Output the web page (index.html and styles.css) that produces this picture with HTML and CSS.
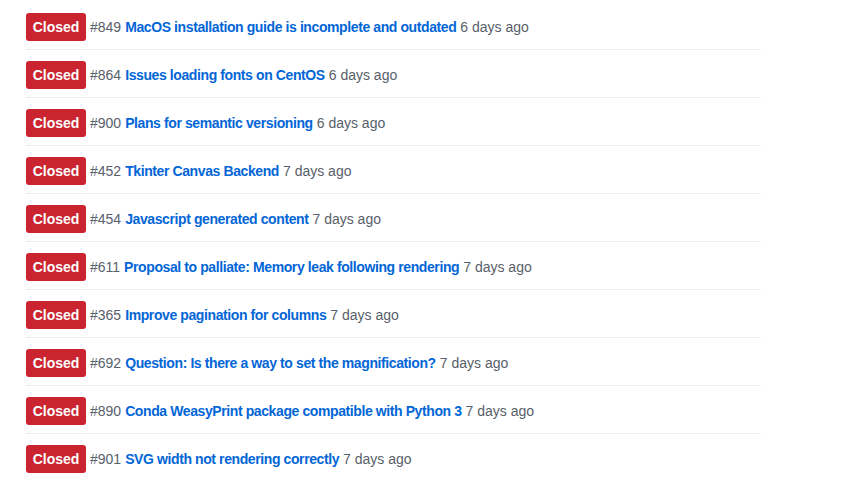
FILE: index.html
```html
<!DOCTYPE html>
<html>
<head>
<meta charset="utf-8">
<link rel="stylesheet" href="styles.css">
</head>
<body>
<ul class="list">
  <li class="row"><span class="badge">Closed</span><span class="num">#849</span><a class="title" href="#">MacOS installation guide is incomplete and outdated</a><span class="time">6 days ago</span></li>
  <li class="row"><span class="badge">Closed</span><span class="num">#864</span><a class="title" href="#">Issues loading fonts on CentOS</a><span class="time">6 days ago</span></li>
  <li class="row"><span class="badge">Closed</span><span class="num">#900</span><a class="title" href="#">Plans for semantic versioning</a><span class="time">6 days ago</span></li>
  <li class="row"><span class="badge">Closed</span><span class="num">#452</span><a class="title" href="#">Tkinter Canvas Backend</a><span class="time">7 days ago</span></li>
  <li class="row"><span class="badge">Closed</span><span class="num">#454</span><a class="title" href="#">Javascript generated content</a><span class="time">7 days ago</span></li>
  <li class="row"><span class="badge">Closed</span><span class="num">#611</span><a class="title" href="#">Proposal to palliate: Memory leak following rendering</a><span class="time">7 days ago</span></li>
  <li class="row"><span class="badge">Closed</span><span class="num">#365</span><a class="title" href="#">Improve pagination for columns</a><span class="time">7 days ago</span></li>
  <li class="row"><span class="badge">Closed</span><span class="num">#692</span><a class="title" href="#">Question: Is there a way to set the magnification?</a><span class="time">7 days ago</span></li>
  <li class="row"><span class="badge">Closed</span><span class="num">#890</span><a class="title" href="#">Conda WeasyPrint package compatible with Python 3</a><span class="time">7 days ago</span></li>
  <li class="row last"><span class="badge">Closed</span><span class="num">#901</span><a class="title" href="#">SVG width not rendering correctly</a><span class="time">7 days ago</span></li>
</ul>
</body>
</html>
```
FILE: styles.css
```css
html, body {
  margin: 0;
  padding: 0;
  background: #ffffff;
}
body {
  font-family: "Liberation Sans", Arial, sans-serif;
  font-size: 14px;
  color: #586069;
}
.list {
  list-style: none;
  margin: 2px 0 0 26px;
  padding: 0;
  width: 735px;
}
.row {
  display: flex;
  align-items: center;
  height: 28px;
  padding: 11px 0 8px 0;
  border-bottom: 1px solid #eaecef;
  white-space: nowrap;
}
.row.last {
  border-bottom: none;
}
.badge {
  display: inline-flex;
  align-items: center;
  justify-content: center;
  box-sizing: border-box;
  width: 60px;
  height: 28px;
  border-radius: 3px;
  background: #cb2431;
  color: #ffffff;
  font-weight: bold;
  font-size: 14px;
  margin-right: 4px;
}
.num {
  margin-right: 4px;
}
.title {
  color: #0366d6;
  font-weight: bold;
  letter-spacing: -0.4px;
  text-decoration: none;
  margin-right: 4px;
}
.time {
  color: #586069;
}
```
